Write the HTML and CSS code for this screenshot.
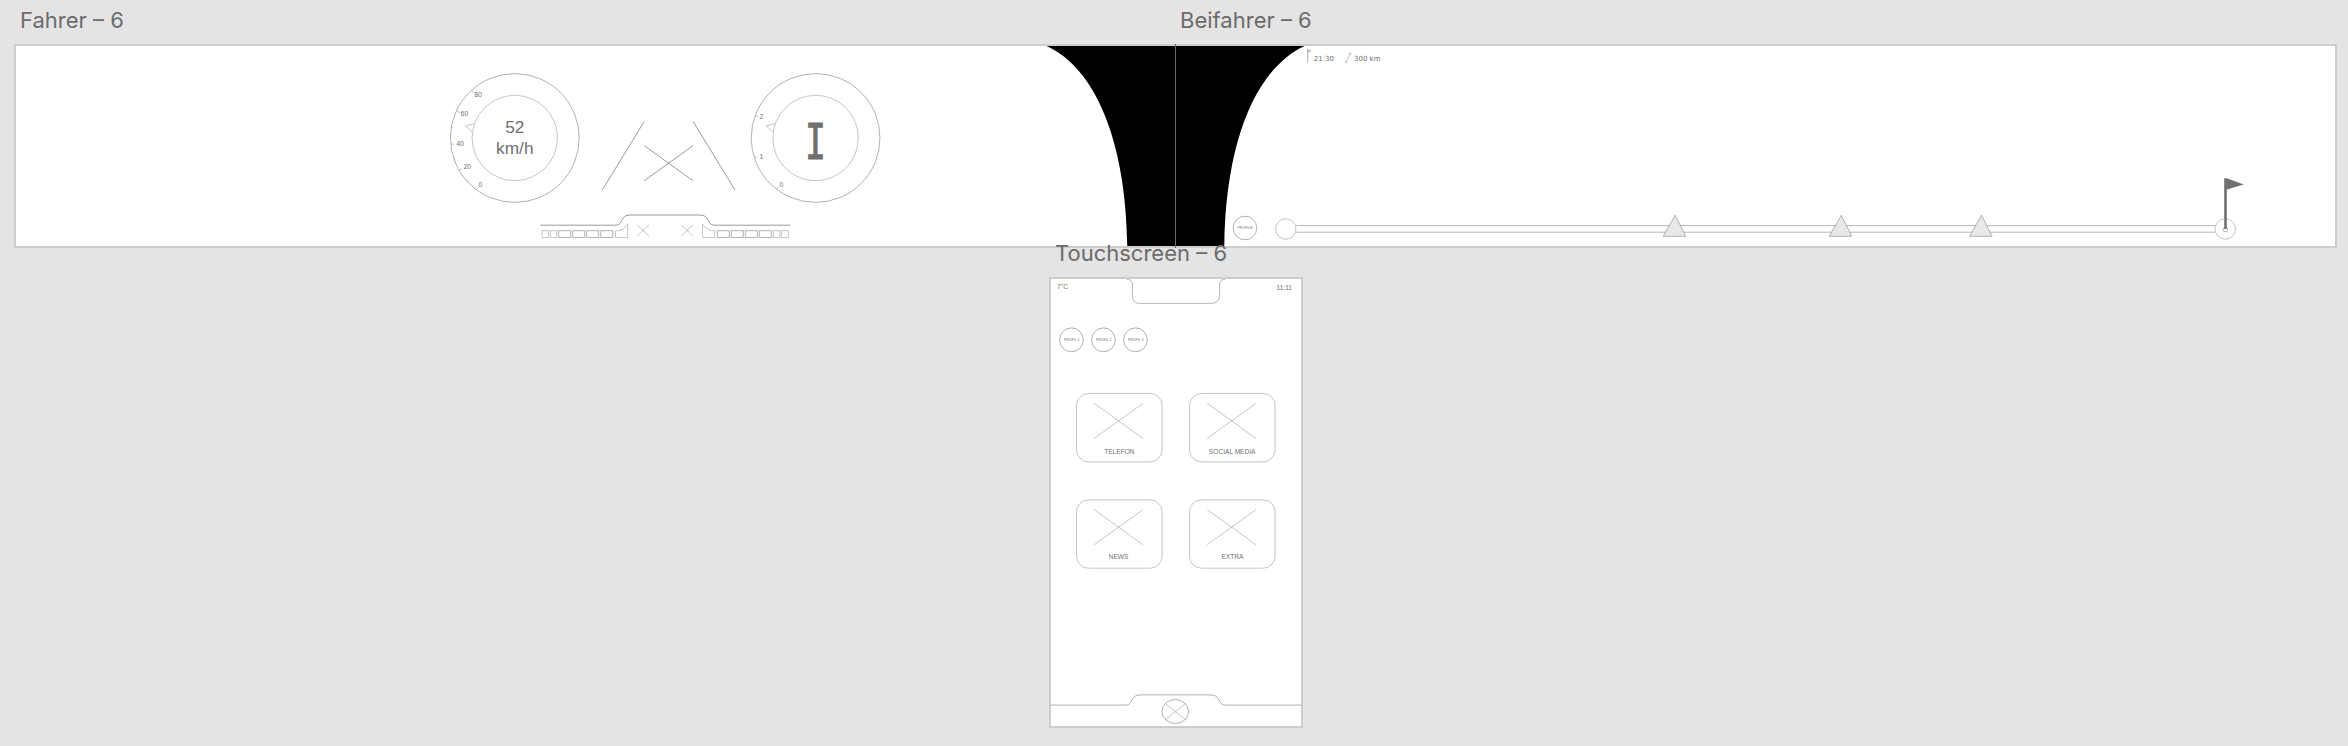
FILE: index.html
```
<!DOCTYPE html>
<html lang="de">
<head>
<meta charset="utf-8">
<title>Cockpit – 6</title>
<link rel="stylesheet" href="styles.css">
</head>
<body>
<main class="canvas">
  <section class="board board-driver">
    <h2 class="board-title">Fahrer – 6</h2>
    <svg class="screen" width="1162" height="204" viewBox="14 44 1162 204">
      <rect class="frame" x="15" y="45" width="1162" height="202"/>
      <path class="black" d="M1046.6 46C1095 68 1126 140 1127.3 246H1175V46Z"/>

      <g class="line">
        <circle cx="514.8" cy="138" r="64.4"/>
        <circle class="soft" cx="514.8" cy="138" r="42.7"/>
        <path class="soft" d="M465.5 126L474.3 123.7M465.5 126L472 131.7M471.5 90.5L475 93M457 111L460 112.7M451.7 127.3L453 127.7M451.3 144.3L454 144M453.3 158.3L455 157.7M459 170.3L462 169M467.3 182L469 180.5M476.7 189.3L478.7 187"/>
        <circle cx="815.6" cy="138" r="64.4"/>
        <circle class="soft" cx="815.6" cy="138" r="42.7"/>
        <path class="soft" d="M775 123.7L766.2 126L773 131.7M755.3 116L758.3 116.5M754.5 157.7L757.3 156.8M776.7 189L778.7 187"/>
      </g>
      <g class="tick">
        <text x="474.6" y="97">80</text><text x="460.8" y="116">60</text><text x="456.6" y="146">40</text><text x="463.7" y="169">20</text><text x="478.6" y="187">0</text>
        <text x="759.6" y="119">2</text><text x="759.4" y="159.2">1</text><text x="779.5" y="187">0</text>
      </g>
      <text class="speed" x="514.8" y="133">52</text>
      <text class="speed" x="514.8" y="154">km/h</text>
      <text class="gear" transform="translate(815.5 158.8) scale(.69 1)">I</text>

      <path class="line strong" d="M644.3 121.3L602.3 190M693 121.3L735 190M644.3 145.7L693 180.7M693 145.7L644.3 180.7"/>
      <path class="line strong" d="M540.3 225.2H616C623 225.2 620 215 630 215H700C710 215 707 225.2 714 225.2H790"/>
      <g class="line">
        <path class="soft" d="M542 230.7h6.5v6.8h-6.5zM550.3 230.7h6.5v6.8h-6.5zM773.4 230.7h6.5v6.8h-6.5zM781.6 230.7h6.8v6.8h-6.8z"/>
        <path d="M558.7 230.7h12v6.8h-12zM572.7 230.7h12v6.8h-12zM586.7 230.7h12v6.8h-12zM600.8 230.7h12v6.8h-12zM717.3 230.7h12v6.8h-12zM731.3 230.7h12v6.8h-12zM745.3 230.7h12v6.8h-12zM759.3 230.7h12v6.8h-12z"/>
        <path class="soft" d="M615.5 231V237.5H627.7V224.3Q623 230.6 615.5 231ZM714.7 231V237.5H702.5V224.3Q707.2 230.6 714.7 231Z"/>
        <path class="soft" d="M637 225L649 236M649 225L637 236M681.2 225L693.2 236M693.2 225L681.2 236"/>
      </g>
    </svg>
  </section>

  <section class="board board-passenger">
    <h2 class="board-title">Beifahrer – 6</h2>
    <svg class="screen" width="1162" height="204" viewBox="1175 44 1162 204">
      <rect class="frame" x="1174" y="45" width="1162" height="202"/>
      <path class="black" d="M1304.6 46C1256.6 68 1225.6 140 1224.3 246H1175V46Z"/>
      <path class="seam" d="M1175.5 44V248"/>
      <g class="line">
        <path d="M1307.7 49V62.5"/>
        <path class="soft" d="M1308 49.8L1311 51L1308 52.2ZM1346.3 61.5L1350 54"/>
        <circle class="soft" cx="1346" cy="62" r=".7"/><circle cx="1350.2" cy="53.8" r=".6"/>
      </g>
      <text class="info" x="1313.8" y="61">21:30</text>
      <text class="info" x="1354" y="61">300 km</text>
      <g class="line">
        <circle cx="1245" cy="228" r="11.8"/>
        <path class="soft wide" d="M1296 225.6H2215.5M1296 232.2H2215.5"/>
        <circle class="soft" cx="1285.8" cy="229" r="10.2"/>
        <circle class="soft" cx="2225.3" cy="229" r="10.2"/>
        <circle cx="2225.4" cy="229.6" r="2.2"/>
      </g>
      <text class="micro" x="1245" y="229">PROFILE</text>
      <path class="marker" d="M1663.2 236.3H1685.8L1675.2 215.2ZM1829.2 236.3H1851.8L1841.3 215.2ZM1969.5 236.3H1992.1L1981.5 215.2Z"/>
      <path class="flag" d="M2224.2 178.3H2226.8L2243.7 184.6L2226.8 189.4V229H2224.2Z"/>
    </svg>
  </section>

  <section class="board board-touch">
    <h2 class="board-title">Touchscreen – 6</h2>
    <div class="touch">
      <header class="status">
        <span class="temp">7°C</span>
        <svg class="notch" width="98" height="26" viewBox="1127 279 98 26"><path class="line soft wide" d="M1127 279.4Q1132.4 279.6 1132.4 284V296Q1133 303.4 1140 303.4H1212Q1219 303 1219.6 296V284Q1219.6 279.6 1225 279.4"/></svg>
        <span class="clock">11:11</span>
      </header>
      <div class="profiles">
        <svg width="25" height="25" viewBox="0 0 25 25"><circle class="line" cx="12.5" cy="12.8" r="11.9"/><text class="micro" x="12.7" y="14.4">PROFIL 1</text></svg>
        <svg width="25" height="25" viewBox="0 0 25 25"><circle class="line" cx="12.5" cy="12.8" r="11.9"/><text class="micro" x="12.7" y="14.4">PROFIL 2</text></svg>
        <svg width="25" height="25" viewBox="0 0 25 25"><circle class="line" cx="12.5" cy="12.8" r="11.9"/><text class="micro" x="12.7" y="14.4">PROFIL 3</text></svg>
      </div>
      <div class="apps">
        <svg width="87" height="70" viewBox="0 0 87 70"><g class="line soft"><rect x=".5" y=".5" width="85.6" height="68.4" rx="12"/><path d="M18.2 10.3L67 45.5M67 10.3L18.2 45.5"/></g><text class="app-label" x="43.4" y="61">TELEFON</text></svg>
        <svg width="87" height="70" viewBox="0 0 87 70"><g class="line soft"><rect x=".5" y=".5" width="85.6" height="68.4" rx="12"/><path d="M18.2 10.3L67 45.5M67 10.3L18.2 45.5"/></g><text class="app-label" x="43.2" y="61">SOCIAL MEDIA</text></svg>
        <svg width="87" height="70" viewBox="0 0 87 70"><g class="line soft"><rect x=".5" y=".8" width="85.6" height="68.4" rx="12"/><path d="M18.2 10.6L67 45.8M67 10.6L18.2 45.8"/></g><text class="app-label" x="42.6" y="60">NEWS</text></svg>
        <svg width="87" height="70" viewBox="0 0 87 70"><g class="line soft"><rect x=".5" y=".8" width="85.6" height="68.4" rx="12"/><path d="M18.2 10.6L67 45.8M67 10.6L18.2 45.8"/></g><text class="app-label" x="43.4" y="60">EXTRA</text></svg>
      </div>
      <svg class="dock" width="250" height="33" viewBox="1051 693 250 33">
        <path class="line" d="M1051 705.1H1126C1133 705.1 1130 694.9 1140 694.9H1211C1221 694.9 1218 705.1 1225 705.1H1301"/>
        <g class="line"><ellipse cx="1175.3" cy="711.5" rx="13.3" ry="12"/><path class="soft" d="M1165.5 703.7L1185.3 719.7M1185.3 703.7L1165.5 719.7"/></g>
      </svg>
    </div>
  </section>
</main>
</body>
</html>
```
FILE: styles.css
```
body { margin: 0; background: #e4e4e4; }
.canvas { position: relative; width: 2348px; height: 746px; overflow: hidden; background: #e4e4e4; }

/* Artboards placed on the free canvas */
.board { position: absolute; display: flex; flex-direction: column; }
.board-driver { left: 14px; top: 4px; width: 1162px; }
.board-passenger { left: 1175px; top: 4px; width: 1162px; }
.board-touch { left: 1049px; top: 237px; width: 254px; }

.board-title {
  margin: 0; height: 40px; padding-left: 5px;
  font: 400 22px/32px Inter, "Liberation Sans", sans-serif;
  color: #6b6b6b; white-space: nowrap;
}
.board-touch .board-title, .board-driver .board-title { padding-left: 6px; }
.screen { display: block; }

.frame { fill: #fff; stroke: #cdcdcd; stroke-width: 2; }
.black { fill: #000; }
.seam { fill: none; stroke: #6a6a6a; stroke-width: 1; }
.line { fill: none; stroke: #707070; stroke-width: .55; }
.soft { stroke-width: .4; }
.strong { stroke-width: .7; }
.wide { stroke-width: .5; }

svg text { font-family: "Liberation Sans", Arial, sans-serif; fill: #707070; }
.tick text { font-size: 6.6px; }
.speed { font-size: 17.3px; text-anchor: middle; }
svg .gear { font-family: "DejaVu Sans Mono", monospace; font-size: 50.4px; text-anchor: middle; stroke: #707070; stroke-width: 1; }
svg .info { font-family: "DejaVu Sans", sans-serif; font-size: 7px; }
.micro { font-size: 3.5px; text-anchor: middle; }
.app-label { font-size: 6.6px; text-anchor: middle; }
.marker { fill: #e8e8e8; stroke: #707070; stroke-width: .5; }
.flag { fill: #707070; }

.touch {
  box-sizing: border-box; width: 254px; height: 451px;
  display: flex; flex-direction: column;
  background: #fff; border: 2px solid #cdcdcd;
}
.status {
  display: grid; grid-template-columns: 76px 98px 76px; height: 48px;
  font: 6.6px/8px "Liberation Sans", Arial, sans-serif; color: #707070;
}
.temp { padding: 4px 0 0 6px; }
.clock { padding: 5px 9px 0 0; text-align: right; }
.notch { display: block; }
.profiles { display: flex; gap: 7px; height: 66px; padding-left: 8px; }
.apps { display: grid; grid-template-columns: 87px 87px; column-gap: 26px; row-gap: 36px; padding-left: 25px; }
.dock { display: block; margin-top: auto; }
```
